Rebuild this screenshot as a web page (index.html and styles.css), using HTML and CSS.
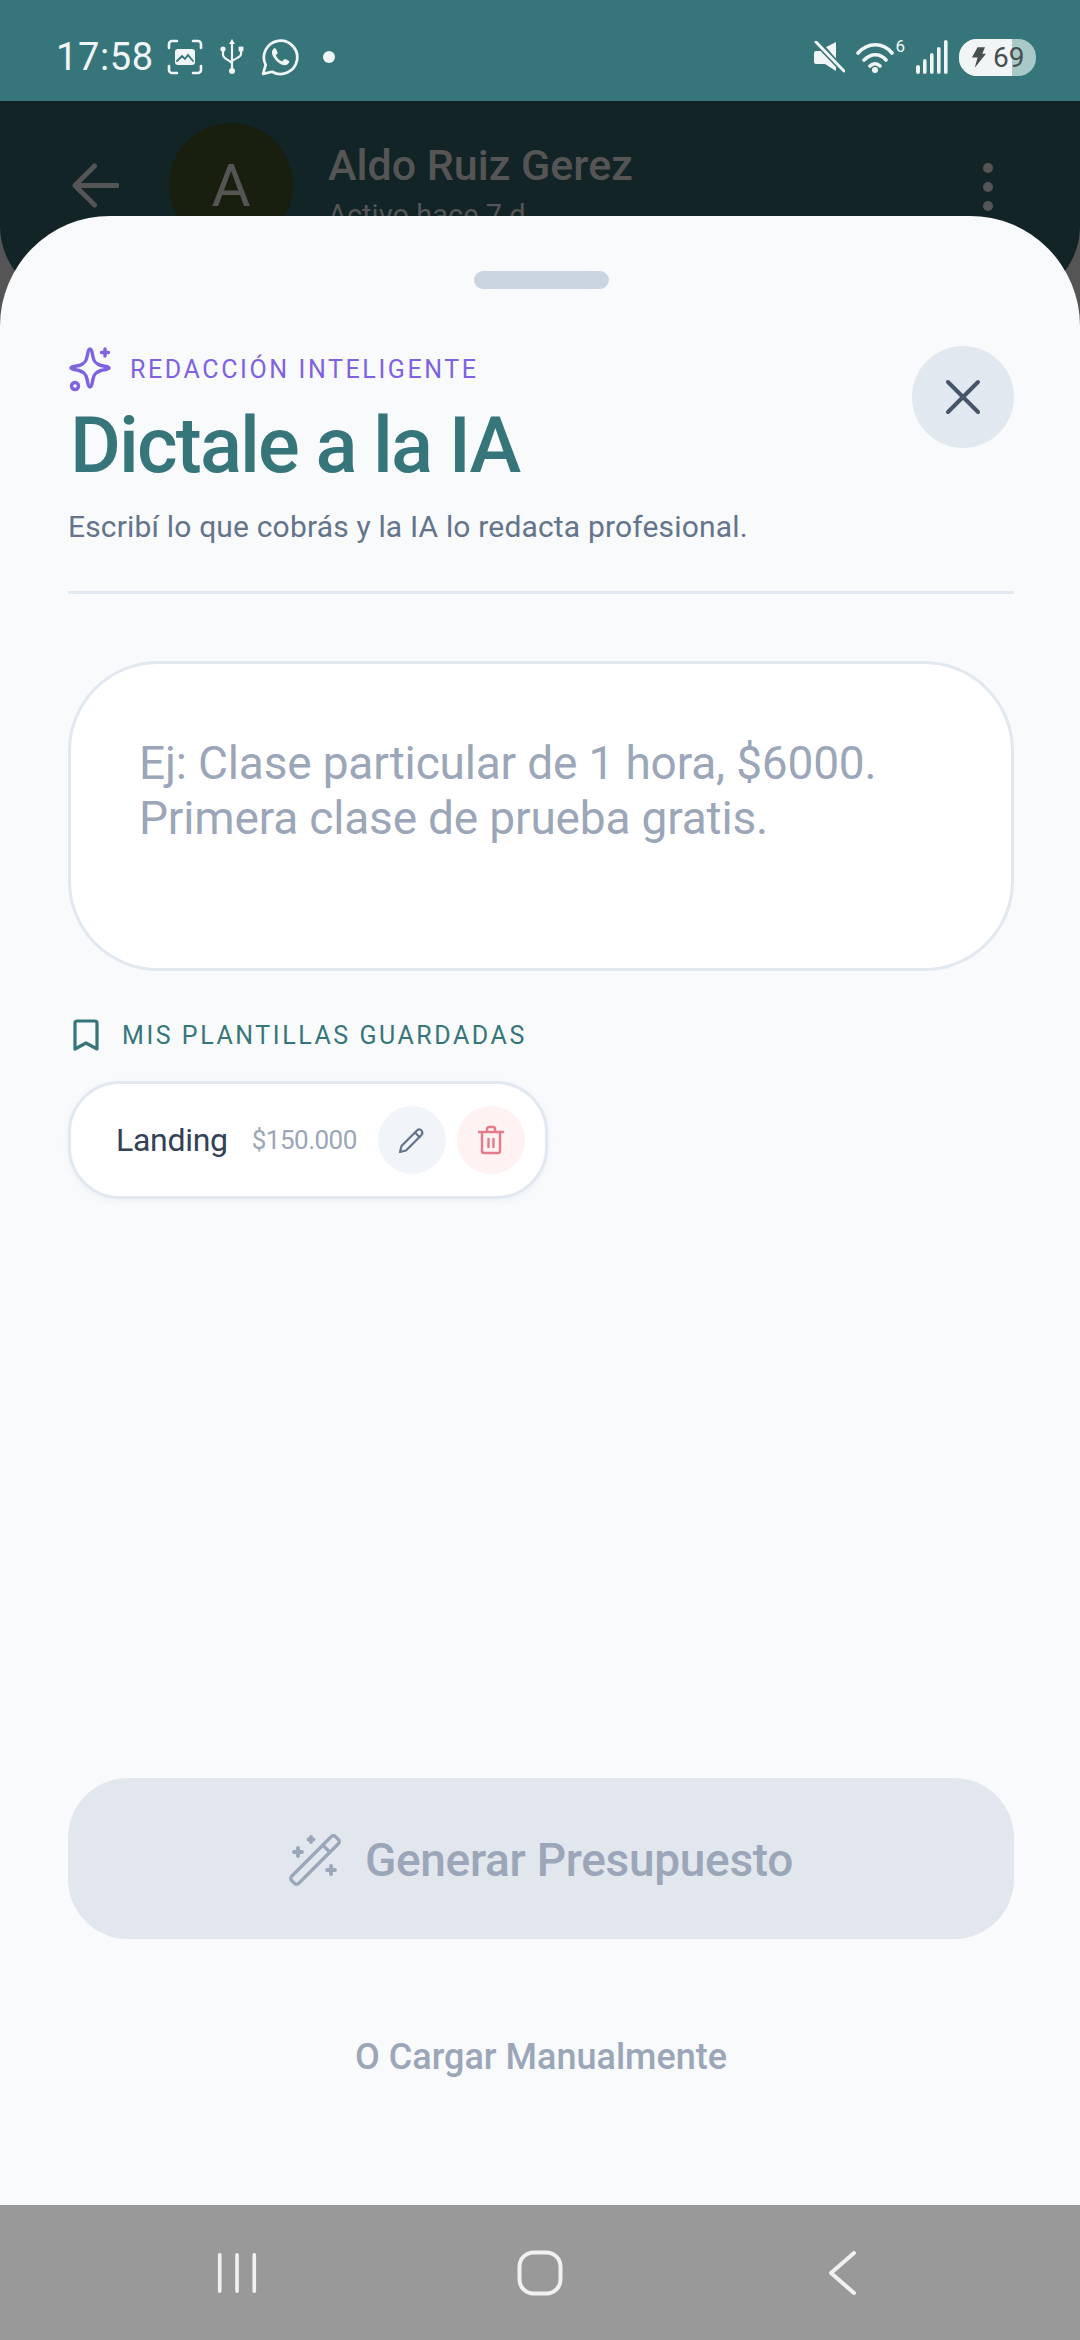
FILE: index.html
```html
<!DOCTYPE html>
<html lang="es">
<head>
  <meta charset="UTF-8">
  <meta name="viewport" content="width=device-width, initial-scale=1.0">
  <title>Dictale a la IA</title>
  <link rel="stylesheet" href="styles.css">
</head>
<body>
  <div class="statusbar">
    <div class="status-left">
      <span class="clock">17:58</span>
      <svg class="ic-shot" viewBox="0 0 36 36" fill="none" stroke="#f1f5f5" stroke-width="2.6" stroke-linecap="round">
        <path d="M2 9V5a3 3 0 0 1 3-3h5M26 2h5a3 3 0 0 1 3 3v4M34 27v4a3 3 0 0 1-3 3h-5M10 34H5a3 3 0 0 1-3-3v-4"/>
        <rect x="8" y="10" width="20" height="16" rx="3" fill="#f1f5f5" stroke="none"/>
        <path d="M10 22l5-5 3 3 3-4 5 6" stroke="#36767a" stroke-width="1.8"/>
      </svg>
      <svg class="ic-usb" viewBox="0 0 24 36" fill="none" stroke="#f1f5f5" stroke-width="2.2" stroke-linecap="round">
        <path d="M12 4v28M3 12v4c0 4 9 6 9 9M21 12v3c0 4-9 5-9 8"/>
        <path d="M12 0l-3 5h6z" fill="#f1f5f5" stroke="none"/>
        <circle cx="3" cy="10" r="2.6" fill="#f1f5f5" stroke="none"/>
        <rect x="18.6" y="7.6" width="4.8" height="4.8" fill="#f1f5f5" stroke="none"/>
        <circle cx="12" cy="32" r="3" fill="#f1f5f5" stroke="none"/>
      </svg>
      <svg class="ic-wa" viewBox="0 0 36 36" fill="none" stroke="#f1f5f5" stroke-width="2.6" stroke-linejoin="round">
        <path d="M2 34l2.4-8.6A15.8 15.8 0 1 1 10.6 32z"/>
        <path d="M12.6 9.8c-1.600 1-2.800 3-2 5.600 1.400 4.400 6 9 10.400 10.200 2.600.6 4.800-.6 5.600-2.400.3-.8.200-1.200-.4-1.600l-3.200-1.600c-.6-.3-1-.2-1.400.3l-1.100 1.400c-.3.4-.7.4-1.200.2-2-.8-4-2.800-5-4.800-.2-.5-.2-.8.2-1.200l1-1.200c.3-.4.300-.8.100-1.200l-1.400-3.200c-.3-.7-1-.9-1.600-.5z" fill="#f1f5f5" stroke="none"/>
      </svg>
      <span class="status-dot"></span>
    </div>
    <div class="status-right">
      <svg class="ic-mute" viewBox="0 0 32 32">
        <path d="M1 12a2 2 0 0 1 2-2h5l15 15v5L12 23H3a2 2 0 0 1-2-2zM13 6l10-5v17z" fill="#f1f5f5"/>
        <path d="M3 1l28 29" stroke="#36767a" stroke-width="6"/>
        <path d="M3 1l28 29" stroke="#f1f5f5" stroke-width="3" stroke-linecap="round"/>
      </svg>
      <div class="wifi">
        <svg class="ic-wifi" viewBox="0 0 38 34" fill="none" stroke="#f1f5f5" stroke-width="3.600" stroke-linecap="round">
          <path d="M2 13c10-11 25-11 34 0M8 20c7-7 16-7 22 0M14 26c3-3 7-3 10 0"/>
          <circle cx="19" cy="30" r="3" fill="#f1f5f5" stroke="none"/>
        </svg>
        <span class="wifi-num">6</span>
      </div>
      <svg class="ic-signal" viewBox="0 0 32 34" fill="#f1f5f5">
        <rect x="0" y="25" width="4" height="9" rx="2"/>
        <rect x="7" y="19" width="3.600" height="15" rx="1.800"/>
        <rect x="14" y="13" width="3.600" height="21" rx="1.800"/>
        <rect x="21" y="7" width="3.600" height="27" rx="1.800"/>
        <rect x="28" y="0" width="3.600" height="34" rx="1.800"/>
      </svg>
      <div class="battery">
        <span class="battery-fill"></span>
        <svg class="ic-bolt" viewBox="0 0 16 22" fill="#48504f"><path d="M7 0h8l-3 7h4L4 22l3-11H1z"/></svg>
        <span class="battery-num">69</span>
      </div>
    </div>
  </div>

  <main class="screen">
    <header class="chat-head">
      <svg class="ic-back" viewBox="0 0 48 46" fill="none" stroke="#555" stroke-width="5" stroke-linecap="round" stroke-linejoin="round">
        <path d="M46 23H3M23 3L3 23l20 20"/>
      </svg>
      <div class="avatar">A</div>
      <div class="chat-info">
        <div class="chat-name">Aldo Ruiz Gerez</div>
        <div class="chat-sub">Activo hace 7 d</div>
      </div>
      <div class="chat-dots"><span></span><span></span><span></span></div>
    </header>

    <section class="sheet">
      <div class="handle"></div>

      <div class="sheet-head">
        <div>
          <div class="eyebrow">
            <svg class="ic-sparkle" viewBox="0 0 44 46" fill="none" stroke="#7f62e2" stroke-width="3.400" stroke-linejoin="round" stroke-linecap="round">
              <path d="M21 3C23 3 23 7 24 11C25 16 27 18 32 19.500C36 20.500 40 20.500 40 22C40 23.500 36 23.500 32 24.500C27 26 25 28 24 33C23 37 23 41 21 41C19 41 19 37 18 33C17 28 15 26 10 24.500C6 23.500 2 23.500 2 22C2 20.500 6 20.500 10 19.500C15 18 17 16 18 11C19 7 19 3 21 3z"/>
              <path d="M36 3v7M32.500 6.500h7"/>
              <circle cx="6" cy="40" r="3.500"/>
            </svg>
            <span>REDACCIÓN INTELIGENTE</span>
          </div>
          <h1>Dictale a la IA</h1>
          <p class="subtitle">Escribí lo que cobrás y la IA lo redacta profesional.</p>
        </div>
        <button class="close-btn">
          <svg viewBox="0 0 36 36" fill="none" stroke="#475569" stroke-width="4" stroke-linecap="round"><path d="M3 3l30 30M33 3L3 33"/></svg>
        </button>
      </div>

      <div class="divider"></div>

      <div class="prompt">Ej: Clase particular de 1 hora, $6000. Primera clase de prueba gratis.</div>

      <div class="saved-label">
        <svg class="ic-bookmark" viewBox="0 0 26 32" fill="none" stroke="#36767a" stroke-width="3.200" stroke-linejoin="round"><path d="M2 4a2 2 0 0 1 2-2h18a2 2 0 0 1 2 2v26l-11-6-11 6z"/></svg>
        <span>MIS PLANTILLAS GUARDADAS</span>
      </div>

      <div class="template">
        <span class="template-name">Landing</span>
        <span class="template-price">$150.000</span>
        <button class="round-btn edit">
          <svg viewBox="0 0 28 28" fill="none" stroke="#64748b" stroke-width="2.200" stroke-linejoin="round" stroke-linecap="round"><path d="M2 26l1.500-6L19 4.500c1.500-1.500 3.500-1.500 4.500 0s1.500 3 0 4.500L8 24.500z"/><path d="M17 6.500l4.500 4.500"/></svg>
        </button>
        <button class="round-btn trash">
          <svg viewBox="0 0 28 30" fill="none" stroke="#e57b8a" stroke-width="2.400" stroke-linejoin="round" stroke-linecap="round"><path d="M2 7h24M5 7v19a2 2 0 0 0 2 2h14a2 2 0 0 0 2-2V7M10 7V4a2 2 0 0 1 2-2h4a2 2 0 0 1 2 2v3M11.500 14v8M16.500 14v8"/></svg>
        </button>
      </div>

      <div class="spacer"></div>

      <button class="generate">
        <svg viewBox="0 0 52 52" fill="none" stroke="#9ba6b8" stroke-width="3.400" stroke-linejoin="round" stroke-linecap="round">
          <g transform="translate(26 26) rotate(-45)">
            <rect x="-31" y="-5" width="62" height="10" rx="3"/>
            <path d="M16 -5v10"/>
          </g>
          <path d="M9 14v8M5 18h8M42 32v8M38 36h8M22 3v5M19.500 5.500h5" stroke-width="3.800"/>
        </svg>
        <span>Generar Presupuesto</span>
      </button>

      <div class="manual">O Cargar Manualmente</div>
    </section>
  </main>

  <nav class="navbar">
    <svg class="ic-recent" viewBox="0 0 44 46" fill="none" stroke="#f1f1f1" stroke-width="4" stroke-linecap="round"><path d="M3 3v40M22 3v40M41 3v40"/></svg>
    <svg class="ic-home" viewBox="0 0 46 46" fill="none" stroke="#f1f1f1" stroke-width="4"><rect x="2.500" y="2.500" width="41" height="41" rx="14"/></svg>
    <svg class="ic-navback" viewBox="0 0 30 46" fill="none" stroke="#f1f1f1" stroke-width="4" stroke-linecap="round" stroke-linejoin="round"><path d="M26 3L3 23l23 20"/></svg>
  </nav>
</body>
</html>
```

FILE: styles.css
```css
* { box-sizing: border-box; }
html, body { margin: 0; padding: 0; }
body { width: 1080px; height: 2340px; display: flex; flex-direction: column; overflow: hidden; font-family: Roboto, "Noto Sans", sans-serif; background: #555; }
svg { display: block; }
button { border: none; padding: 0; font-family: inherit; }

.statusbar { height: 101px; flex: none; background: #36767a; display: flex; justify-content: space-between; align-items: center; padding: 13px 44px 0 56px; color: #f1f5f5; }
.status-left, .status-right { display: flex; align-items: center; }
.clock { font-size: 38px; letter-spacing: 0.6px; margin-right: 13px; }
.ic-shot { width: 36px; height: 36px; margin-right: 17px; }
.ic-usb { width: 24px; height: 36px; margin-right: 17px; }
.ic-wa { width: 38px; height: 38px; }
.status-dot { width: 12px; height: 12px; border-radius: 50%; background: #f1f5f5; margin-left: 24px; }
.ic-mute { width: 32px; height: 32px; margin-right: 11px; }
.wifi { display: flex; align-items: flex-start; margin-right: 11px; }
.ic-wifi { width: 38px; height: 34px; }
.wifi-num { font-size: 17px; line-height: 20px; margin-left: 1px; margin-top: -4px; }
.ic-signal { width: 32px; height: 34px; margin-right: 11px; }
.battery { position: relative; width: 77px; height: 37px; border-radius: 18px; background: #a8c9c8; overflow: hidden; display: flex; align-items: center; padding-left: 12px; }
.battery-fill { position: absolute; left: 0; top: 0; bottom: 0; width: 53px; background: #f1f5f5; }
.ic-bolt { position: relative; width: 15px; height: 21px; margin-right: 7px; }
.battery-num { position: relative; font-size: 28px; color: #48504f; }

.screen { flex: 1; position: relative; display: flex; flex-direction: column; min-height: 0; }
.chat-head { height: 200px; flex: none; margin-bottom: -85px; background: #122426; border-radius: 0 0 75px 75px; display: flex; align-items: flex-start; padding: 22px 87px 0 72px; color: #555; }
.ic-back { width: 47px; height: 45px; margin-top: 40px; }
.avatar { width: 124px; height: 124px; border-radius: 50%; background: #181f0e; display: flex; align-items: center; justify-content: center; font-size: 60px; margin-left: 50px; flex: none; }
.chat-info { margin-left: 35px; flex: 1; }
.chat-name { font-size: 43px; font-weight: 500; line-height: 58px; margin-top: 13px; }
.chat-sub { font-size: 29px; line-height: 40px; margin-top: 1px; }
.chat-dots { display: flex; flex-direction: column; gap: 9px; margin-top: 40px; }
.chat-dots span { width: 10px; height: 10px; border-radius: 50%; background: #555; }

.sheet { position: relative; flex: 1; min-height: 0; background: #f8fafc; border-radius: 110px 110px 0 0; padding: 55px 66px 0 68px; display: flex; flex-direction: column; }
.handle { width: 135px; height: 18px; border-radius: 9px; background: #cbd5e1; align-self: center; }

.sheet-head { display: flex; justify-content: space-between; align-items: flex-start; margin-top: 57px; }
.eyebrow { display: flex; align-items: center; gap: 17px; height: 46px; padding-left: 1px; color: #7f62e2; font-size: 25px; letter-spacing: 2.6px; }
.ic-sparkle { width: 44px; height: 46px; }
h1 { margin: 8px 0 0 2px; font-size: 78px; line-height: 92px; font-weight: 500; letter-spacing: -1.9px; color: #36767a; }
.subtitle { margin: 15px 0 0; font-size: 30px; line-height: 40px; letter-spacing: 0.17px; color: #64748b; }
.close-btn { width: 102px; height: 102px; border-radius: 50%; background: #e2e8f0; display: flex; align-items: center; justify-content: center; }
.close-btn svg { width: 36px; height: 36px; }

.divider { height: 3px; background: #e2e8f0; margin-top: 44px; }

.prompt { margin-top: 67px; height: 310px; flex: none; background: #fff; border: 3px solid #e2e8f0; border-radius: 90px; padding: 72px 70px 0 68px; font-size: 46px; line-height: 55px; letter-spacing: -0.17px; color: #9ba6b8; }

.saved-label { display: flex; align-items: center; gap: 23px; margin-top: 48px; padding-left: 5px; color: #36767a; font-size: 25px; letter-spacing: 2.55px; }
.ic-bookmark { width: 26px; height: 32px; }

.template { align-self: flex-start; display: flex; align-items: center; margin-top: 30px; height: 118px; background: #fff; border: 3px solid #e2e8f0; border-radius: 52px; padding: 0 20px 0 45px; box-shadow: 0 2px 6px rgba(148, 163, 184, 0.1); }
.template-name { font-size: 32px; letter-spacing: -0.3px; color: #334155; }
.template-price { font-size: 26px; letter-spacing: -0.5px; color: #9ba6b8; margin-left: 24px; }
.round-btn { width: 68px; height: 68px; border-radius: 50%; display: flex; align-items: center; justify-content: center; }
.round-btn.edit { background: #f1f5f9; margin-left: 21px; }
.round-btn.trash { background: #fef2f2; margin-left: 11px; }
.round-btn svg { width: 28px; height: 30px; }

.spacer { flex: 1; }

.generate { height: 161px; flex: none; border-radius: 60px; background: #e2e7ee; display: flex; align-items: center; justify-content: center; gap: 24px; padding-top: 2px; font-size: 46px; font-weight: 500; letter-spacing: -0.3px; color: #9ba6b8; }
.generate svg { width: 52px; height: 52px; }

.manual { text-align: center; margin-top: 93px; margin-bottom: 123px; font-size: 36px; line-height: 50px; font-weight: 500; color: #9ba6b8; }

.navbar { height: 135px; flex: none; background: #999; display: flex; justify-content: space-between; align-items: center; padding: 0 222px 0 217px; }
.ic-recent { width: 40px; height: 46px; }
.ic-home { width: 46px; height: 46px; margin-right: 6px; }
.ic-navback { width: 30px; height: 46px; }
```
